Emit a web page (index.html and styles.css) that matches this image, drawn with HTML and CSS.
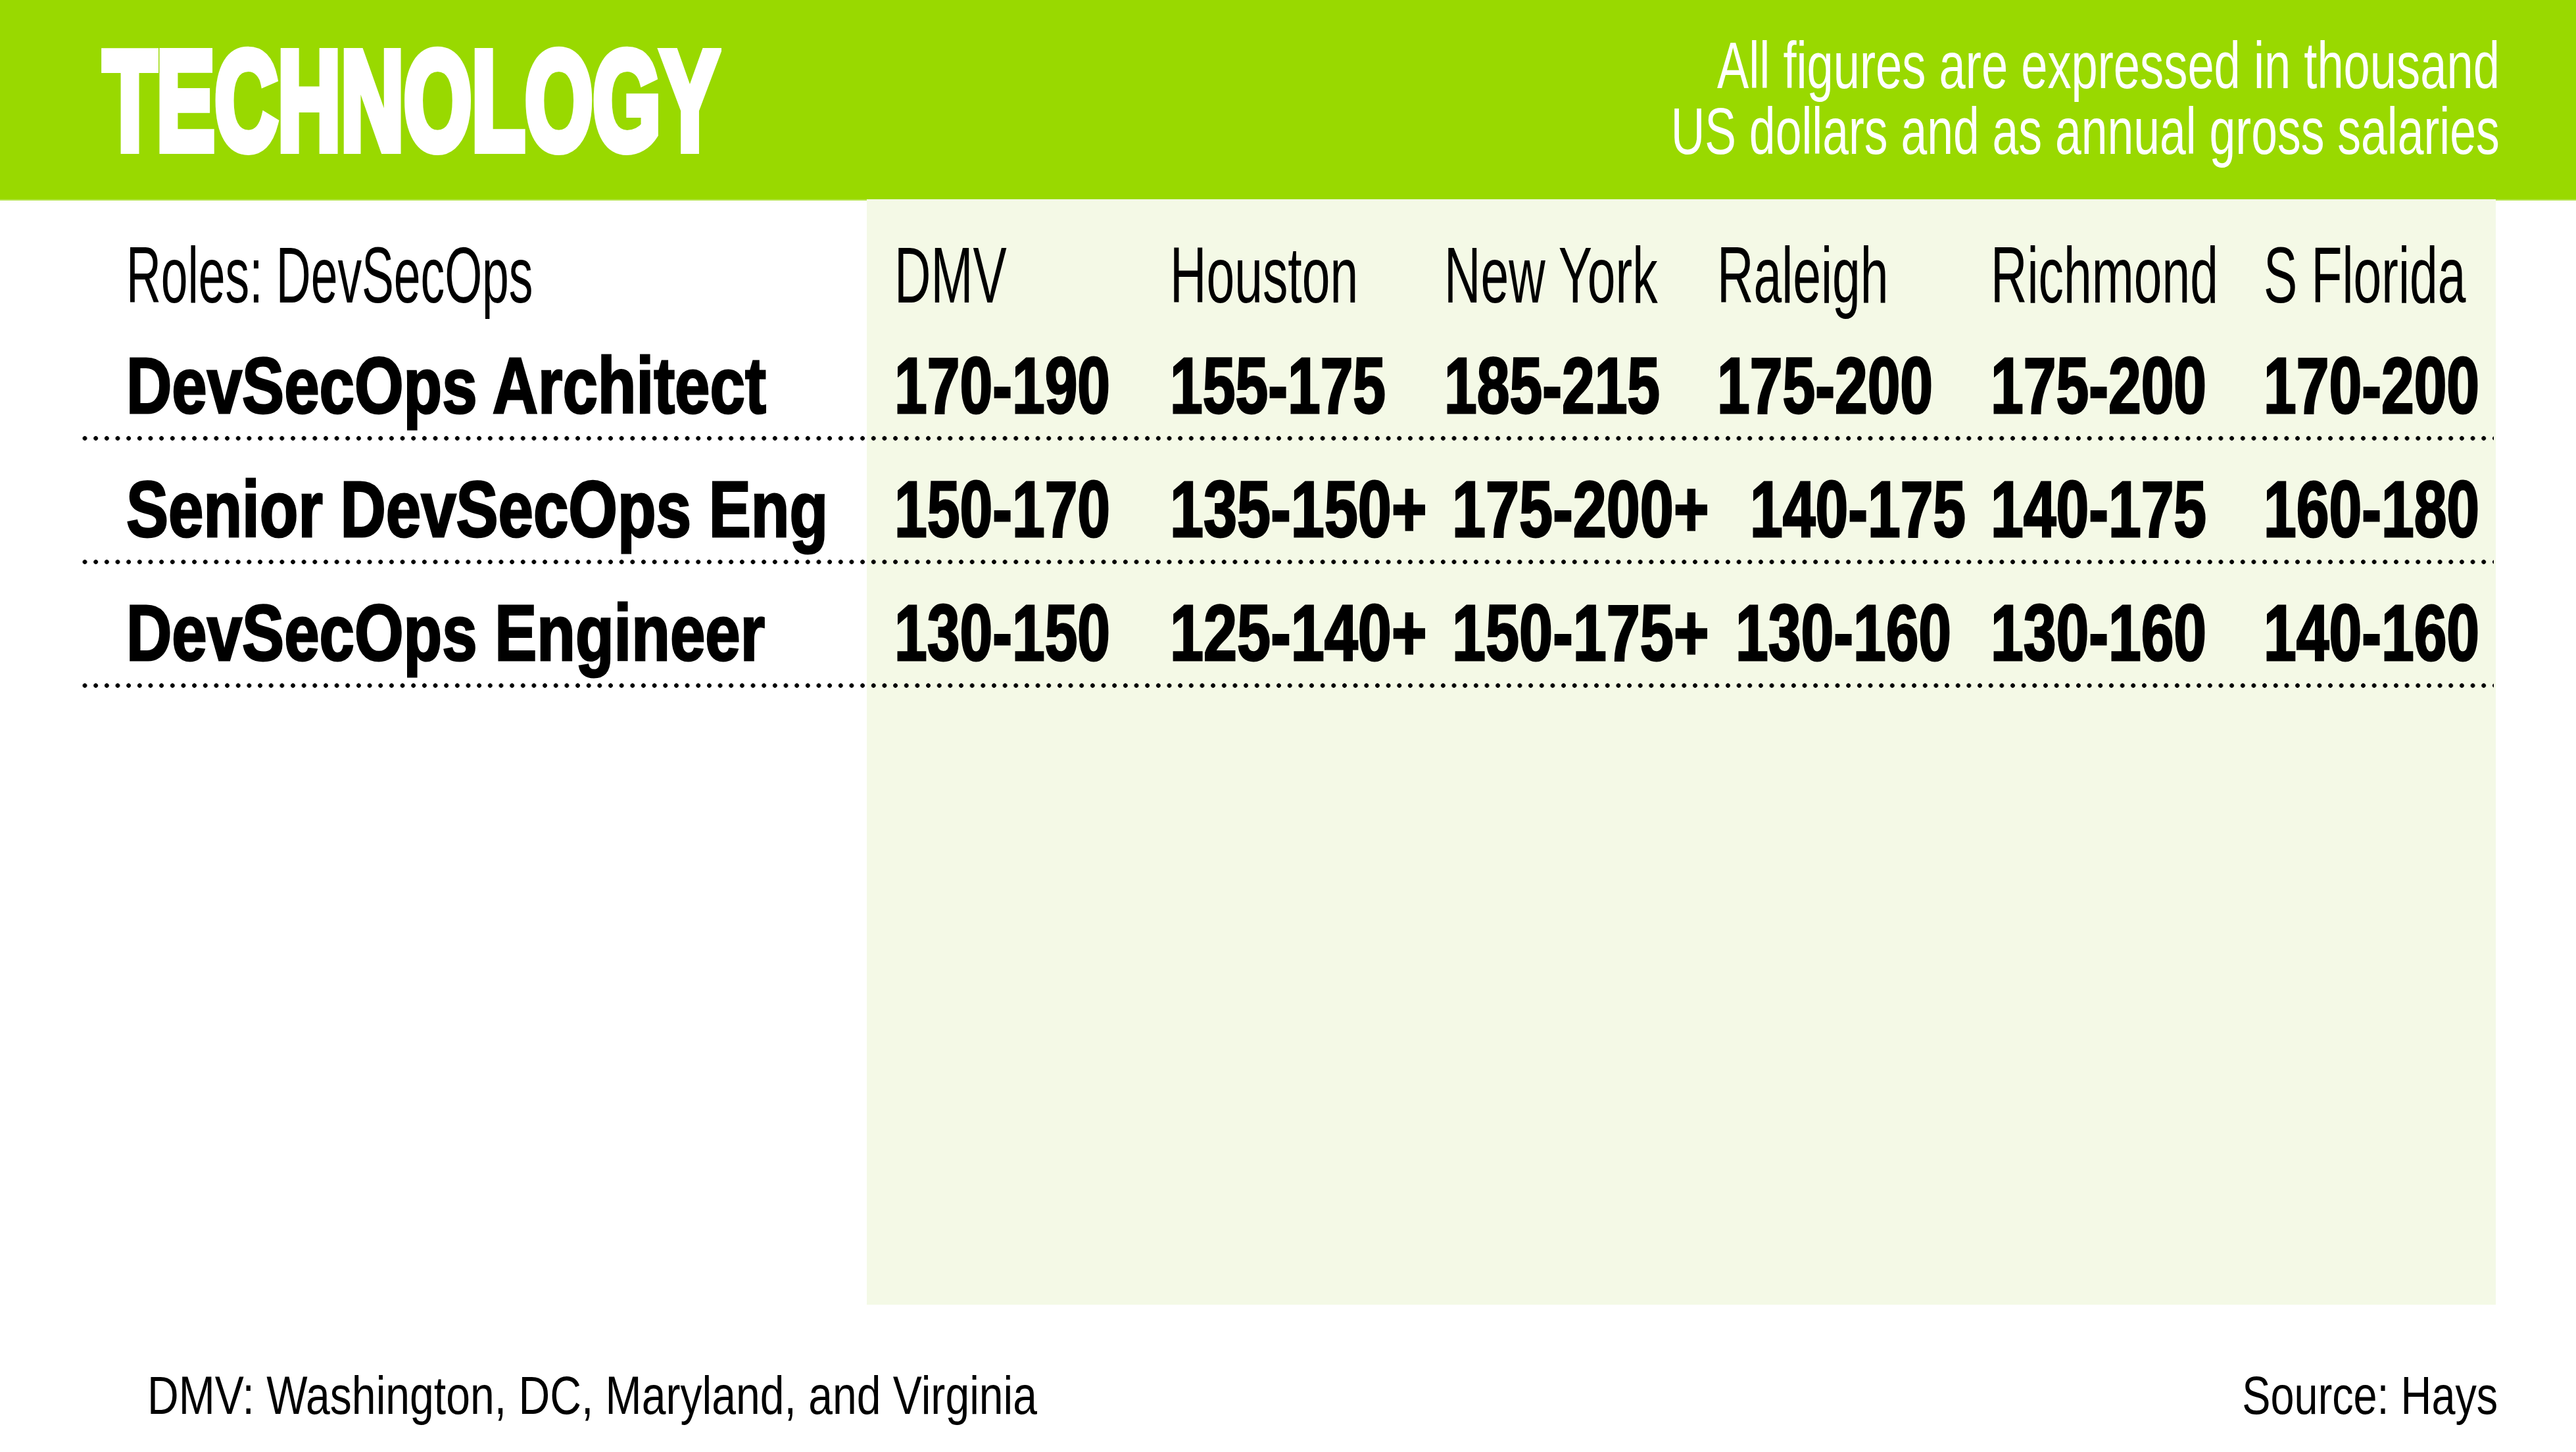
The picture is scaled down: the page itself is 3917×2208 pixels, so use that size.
FILE: index.html
```html
<!DOCTYPE html>
<html lang="en">
<head>
<meta charset="utf-8">
<title>Technology salaries – DevSecOps</title>
<link rel="stylesheet" href="styles.css">
</head>
<body>
<div class="page">
  <header class="banner">
    <h1 class="title"><span class="sq sq-title">TECHNOLOGY</span></h1>
    <p class="note">
      <span class="sq sq-note sq-note-wide">All figures are expressed in thousand</span>
      <span class="sq sq-note">US dollars and as annual gross salaries</span>
    </p>
  </header>

  <section class="content">
    <div class="panel"></div>
    <div class="table">
      <div class="row row-head">
        <div class="cell label"><span class="sq sq-roles">Roles: DevSecOps</span></div>
        <div class="cell"><span class="sq sq-head">DMV</span></div>
        <div class="cell"><span class="sq sq-head">Houston</span></div>
        <div class="cell"><span class="sq sq-head">New York</span></div>
        <div class="cell"><span class="sq sq-head">Raleigh</span></div>
        <div class="cell"><span class="sq sq-head">Richmond</span></div>
        <div class="cell"><span class="sq sq-head">S Florida</span></div>
      </div>
      <div class="row">
        <div class="cell label"><span class="sq sq-role">DevSecOps Architect</span></div>
        <div class="cell"><span class="sq sq-num">170-190</span></div>
        <div class="cell"><span class="sq sq-num">155-175</span></div>
        <div class="cell"><span class="sq sq-num">185-215</span></div>
        <div class="cell"><span class="sq sq-num">175-200</span></div>
        <div class="cell"><span class="sq sq-num">175-200</span></div>
        <div class="cell"><span class="sq sq-num">170-200</span></div>
      </div>
      <div class="row">
        <div class="cell label"><span class="sq sq-role">Senior DevSecOps Eng</span></div>
        <div class="cell"><span class="sq sq-num">150-170</span></div>
        <div class="cell"><span class="sq sq-num sq-plus">135-150+</span></div>
        <div class="cell shift-sm"><span class="sq sq-num sq-plus">175-200+</span></div>
        <div class="cell shift-lg"><span class="sq sq-num">140-175</span></div>
        <div class="cell"><span class="sq sq-num">140-175</span></div>
        <div class="cell"><span class="sq sq-num">160-180</span></div>
      </div>
      <div class="row">
        <div class="cell label"><span class="sq sq-role">DevSecOps Engineer</span></div>
        <div class="cell"><span class="sq sq-num">130-150</span></div>
        <div class="cell"><span class="sq sq-num sq-plus">125-140+</span></div>
        <div class="cell shift-sm"><span class="sq sq-num sq-plus">150-175+</span></div>
        <div class="cell shift-md"><span class="sq sq-num">130-160</span></div>
        <div class="cell"><span class="sq sq-num">130-160</span></div>
        <div class="cell"><span class="sq sq-num">140-160</span></div>
      </div>
    </div>
  </section>

  <footer class="footer">
    <span class="sq sq-foot">DMV: Washington, DC, Maryland, and Virginia</span>
    <span class="sq sq-foot sq-right">Source: Hays</span>
  </footer>
</div>
</body>
</html>
```

FILE: styles.css
```css
* {
  box-sizing: border-box;
  margin: 0;
  padding: 0;
}

html,
body {
  width: 3917px;
  height: 2208px;
  overflow: hidden;
  background: #ffffff;
}

body {
  font-family: "Liberation Sans", Arial, sans-serif;
  color: #000000;
}

.page {
  display: flex;
  flex-direction: column;
  width: 3917px;
  height: 2208px;
}

/* condensed text: glyphs squeezed horizontally */
.sq {
  display: inline-block;
  white-space: nowrap;
  transform-origin: left center;
}

.sq-right {
  transform-origin: right center;
}

/* ---------- banner ---------- */
.banner {
  flex: 0 0 305px;
  display: flex;
  justify-content: space-between;
  align-items: flex-start;
  padding: 0 116px 0 157px;
  background: #99d900;
  border-bottom: 2px solid #b4e44a;
}

.title {
  flex: 0 0 960px;
  width: 960px;
  margin-top: 46px;
  font-size: 214px;
  line-height: 214px;
  font-weight: 700;
  color: #ffffff;
  -webkit-text-stroke: 14px #ffffff;
  white-space: nowrap;
}

.sq-title {
  width: 1530px;
  transform: scaleX(0.62);
}

.note {
  margin-top: 43px;
  display: flex;
  flex-direction: column;
  align-items: flex-end;
  gap: 2px;
  font-size: 101px;
  line-height: 112px;
  color: #ffffff;
}

.note .sq-note + .sq-note {
  margin-top: -14px;
}

.sq-note {
  transform-origin: right center;
  transform: scaleX(0.708);
}

.sq-note-wide {
  transform: scaleX(0.716);
}

/* ---------- table area ---------- */
.content {
  flex: 0 0 1681px;
  display: grid;
  grid-template-columns: 1318px 2477px 1fr;
  grid-template-rows: 1681px;
  margin-top: -2px;
}

.panel {
  grid-column: 2;
  grid-row: 1;
  background: #f4f9e6;
}

.table {
  grid-column: 1 / 3;
  grid-row: 1;
  align-self: start;
  margin: 0 3px 0 125px;
  display: flex;
  flex-direction: column;
}

.row {
  display: grid;
  grid-template-columns: 1235px 419px 417px 415px 416px 415px 1fr;
  padding: 43px 0 22px;
  font-size: 120px;
  line-height: 123px;
  font-weight: 700;
  background-image: radial-gradient(circle at center, #000000 3px, rgba(0, 0, 0, 0) 3.7px);
  background-size: 16.67px 7px;
  background-position: -4.33px 100%;
  background-repeat: repeat-x;
}

.row-head {
  padding: 55px 0 3px;
  font-size: 121px;
  line-height: 121px;
  font-weight: 400;
  background: none;
}

.cell {
  min-width: 0;
}

.label {
  padding-left: 67px;
}

.shift-sm {
  padding-left: 12px;
}

.shift-md {
  padding-left: 28px;
}

.shift-lg {
  padding-left: 50px;
}

.sq-roles {
  transform: scaleX(0.605);
}

.sq-head {
  transform: scaleX(0.635);
}

.sq-role {
  transform: scaleX(0.80);
  -webkit-text-stroke: 3px #000000;
}

.sq-num {
  transform: scaleX(0.745);
  -webkit-text-stroke: 3px #000000;
}

.sq-num.sq-plus {
  transform: scaleX(0.765);
}

/* ---------- footer ---------- */
.footer {
  flex: 1 1 auto;
  display: flex;
  justify-content: space-between;
  align-items: flex-start;
  padding: 97px 119px 0 224px;
  font-size: 82px;
  line-height: 82px;
}

.sq-foot {
  transform: scaleX(0.806);
}

.sq-foot.sq-right {
  transform: scaleX(0.79);
}
```
